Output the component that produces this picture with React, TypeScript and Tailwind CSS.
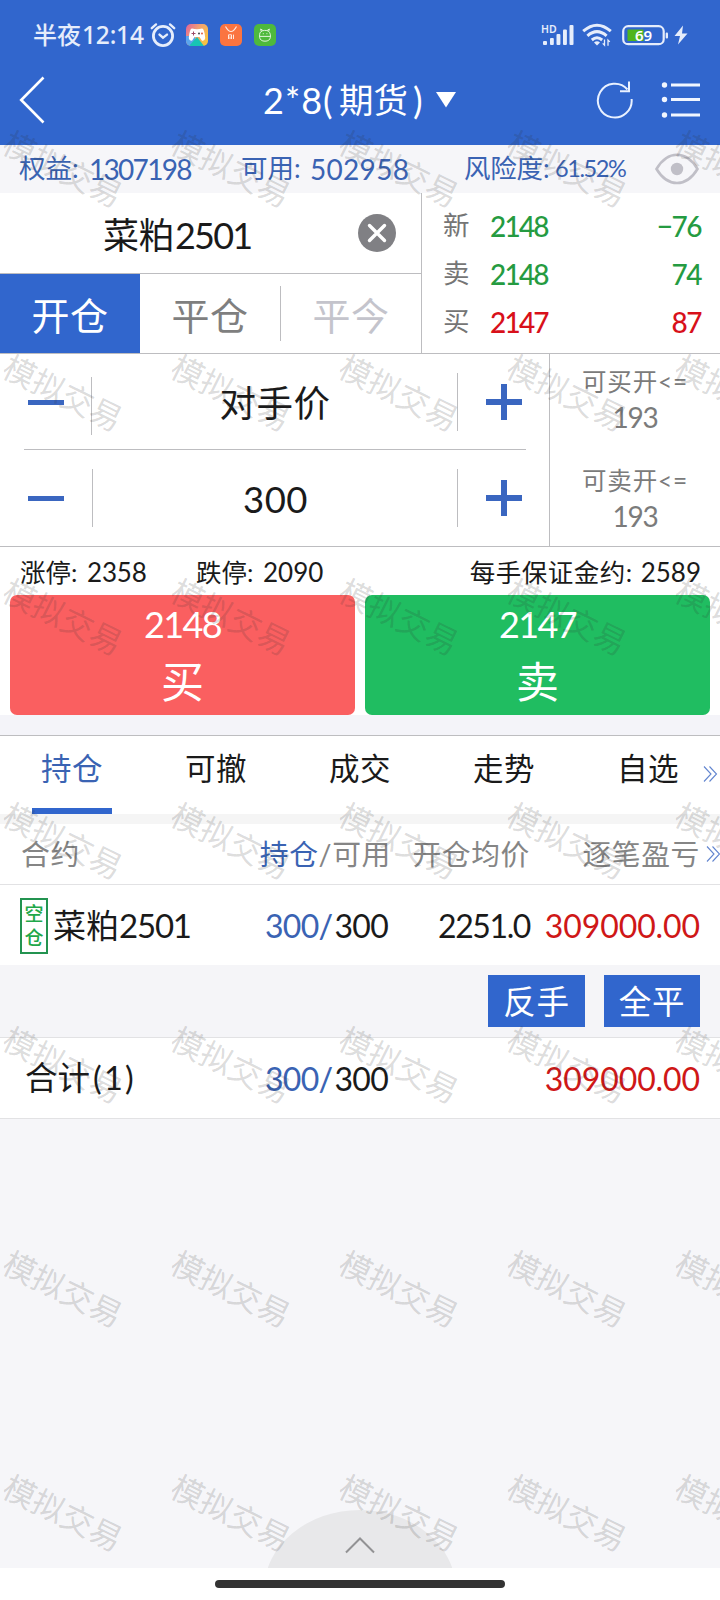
import React from "react";

const FONT = "font-['Lato','Noto_Sans_CJK_SC',sans-serif]";

function StatusBar() {
  return (
    <div className="flex h-[70px] items-start justify-between pl-[33px] pr-[32px] text-[#e6edfb]">
      <div className="flex h-[70px] items-center">
        <span className="w-[117px] whitespace-nowrap font-['Noto_Sans','Noto_Sans_CJK_SC',sans-serif] text-[24px] font-medium leading-[70px]">
          半夜<span className="ml-px text-[24.5px] tracking-[-0.2px]">12:14</span>
        </span>
        <svg className="h-[26px] w-[26px]" viewBox="0 0 26 26" fill="none" stroke="#e6edfb" strokeWidth="2.8" strokeLinecap="round">
          <circle cx="13" cy="14" r="9.6" />
          <path d="M1.8 6.2 6 2.4M24.2 6.2 20 2.4" strokeWidth="2.4" />
          <path d="M9.5 12.6 13 15.6 17 12.6" strokeWidth="2.4" />
        </svg>
        <svg className="ml-[10px] h-[22px] w-[22px]" viewBox="0 0 22 22">
          <defs>
            <linearGradient id="game" x1="0" y1="0" x2="1" y2="0.6">
              <stop offset="0" stopColor="#e0609c" />
              <stop offset="0.5" stopColor="#f2a172" />
              <stop offset="1" stopColor="#f6c244" />
            </linearGradient>
            <clipPath id="gclip"><rect width="22" height="22" rx="5" /></clipPath>
          </defs>
          <g clipPath="url(#gclip)">
            <rect width="22" height="22" fill="url(#game)" />
            <path d="M0 12h9v10H0z" fill="#5aa5ee" />
            <path d="M3 22 11 13l7 9z" fill="#18c5b4" />
            <path d="M6 4.5q5 1.6 10 0 2.4 0 3.2 9.5-.5 3.4-3.4 2.500L13.500 13h-5L6.200 16.500q-3 .8-3.400-2.500Q3.600 4.500 6 4.500z" fill="#fff" />
            <path d="M7.500 7.500v4M5.500 9.500h4" stroke="#9c4a66" strokeWidth="1" />
            <circle cx="13" cy="9.500" r="0.900" fill="#333" />
            <circle cx="16" cy="9.500" r="0.900" fill="#e05030" />
          </g>
        </svg>
        <svg className="ml-[12px] h-[22px] w-[22px]" viewBox="0 0 22 22" fill="none">
          <rect width="22" height="22" rx="5" fill="#fb7440" />
          <path d="M5.500 2.500q5.500 10 11 0" stroke="#ffe9df" strokeWidth="1.200" />
          <path d="M8.500 15v-4.200h3V15M10 12.400V15M13.500 10.600V15" stroke="#ffe9df" strokeWidth="1" />
        </svg>
        <svg className="ml-[12px] h-[22px] w-[22px]" viewBox="0 0 22 22" fill="none">
          <rect width="22" height="22" rx="5" fill="#4eb93c" />
          <path d="M5.600 10.800q0-4 5-4.400t5.800 4.400v2.400q-.6 4-5.400 4t-5.400-4zM5.600 12.400h10.800M7.300 7.400 6.600 5l2.200 1.400M14.700 7.400l.7-2.400-2.200 1.400M9.300 9.200v1M12.900 9.200v1" stroke="#dff5da" strokeWidth="1" />
        </svg>
      </div>
      <div className="flex h-[70px] items-center">
        <svg className="h-[24px] w-[34px]" viewBox="0 0 34 24" fill="#e6edfb">
          <text x="0" y="9.500" fontSize="10.500" fontWeight="600" fontFamily="Noto Sans, sans-serif">HD</text>
          <rect x="2" y="18" width="4" height="4" rx="1" />
          <rect x="9" y="15" width="3.800" height="7" rx="1" />
          <rect x="15.500" y="11" width="3.900" height="11" rx="1" />
          <rect x="22" y="6.500" width="3.900" height="15.500" rx="1" />
          <rect x="28.500" y="2" width="4" height="20" rx="1" />
        </svg>
        <svg className="ml-[7px] h-[24px] w-[30px]" viewBox="0 0 30 24" fill="none" stroke="#e6edfb" strokeWidth="3">
          <path d="M1.200 8.200q13.800-12 27.600 0M5.400 12.800q9.600-8.400 19.200 0M9.800 17q5.200-4.400 10.400 0" />
          <path d="m15 22.500-3-3q3-2.400 6 0z" fill="#e6edfb" stroke="none" />
          <path d="M22.500 16.500v5.700l-1.800-1.800M26 22.800v-5.700l1.800 1.800" strokeWidth="1.300" />
        </svg>
        <svg className="ml-[10px] h-[22px] w-[47px]" viewBox="0 0 47 22">
          <rect x="1.200" y="2.200" width="40.500" height="18" rx="5" fill="none" stroke="#e6edfb" strokeWidth="2.200" />
          <rect x="5.500" y="5.500" width="16" height="11.500" fill="#4fb51d" />
          <rect x="43.700" y="8.500" width="2.300" height="6" rx="1" fill="#e6edfb" />
          <text x="21.500" y="16.500" textAnchor="middle" fontSize="15" fontWeight="600" fontFamily="Noto Sans, sans-serif" fill="#fff">69</text>
        </svg>
        <svg className="ml-[5px] h-[20px] w-[14px]" viewBox="0 0 14 20">
          <path d="M9 .5.500 11H6L4 19.500 13.500 8.500H8z" fill="#e6edfb" />
        </svg>
      </div>
    </div>
  );
}

function TitleBar() {
  return (
    <div className="grid h-[75px] grid-cols-[263px_1fr_125px] text-white">
      <svg className="ml-[18px] mt-[6px] h-[48px] w-[28px]" viewBox="0 0 28 48" fill="none" stroke="#fff" strokeWidth="2.600">
        <path d="M25.500 1.500 3.200 24l22.300 22.500" />
      </svg>
      <div className="flex h-[60px] items-center whitespace-nowrap">
        <span className="w-[69px] text-[36px] tracking-[1px]">2*8(</span>
        <span className="ml-[7px] text-[34.500px]">期货</span>
        <span className="ml-[5px] w-[20px] text-[36px]">)</span>
        <svg className="ml-[2px] mt-[-1px] h-[16px] w-[22px]" viewBox="0 0 22 16"><path d="M1 0h20L11 15.500z" fill="#fff" /></svg>
      </div>
      <div className="flex h-[60px] items-center">
        <svg className="h-[40px] w-[40px]" viewBox="0 0 40 40" fill="none" stroke="#e9f1ff" strokeWidth="2">
          <path d="M36.600 19A16.900 16.900 0 1 1 32.500 9.500" />
          <path d="M34 1.500V11.300H25" />
        </svg>
        <svg className="ml-[26px] h-[40px] w-[40px]" viewBox="0 0 40 40" fill="#f1f6ff">
          <circle cx="3.500" cy="5" r="2.700" /><circle cx="3.500" cy="19.500" r="2.700" /><circle cx="3.500" cy="35" r="2.700" />
          <path d="M10 3.500h29v3H10zM10 18h29v3H10zM10 33.500h29v3H10z" />
        </svg>
      </div>
    </div>
  );
}

function AccountBar() {
  return (
    <div className="flex h-[48px] items-center whitespace-nowrap bg-[#f6f6f9] pl-[19px] text-[26.500px] text-[#3a63b3]">
      <span className="w-[70px]">权益:</span>
      <span className="w-[152px] text-[28px] tracking-[-1.700px]">1307198</span>
      <span className="w-[69px]">可用:</span>
      <span className="w-[154px] text-[28px] tracking-[0.300px]">502958</span>
      <span className="w-[91px] tracking-[-0.200px]">风险度:</span>
      <span className="w-[100px] text-[23.500px] tracking-[-1.400px]">61.52%</span>
      <svg className="h-[32px] w-[44px]" viewBox="0 0 44 32" fill="none" stroke="#c0bfc7" strokeWidth="2.600">
        <path d="M1.500 16Q10 1.800 22 1.800T42.500 16Q34 30 22 30T1.500 16z" />
        <circle cx="22" cy="16" r="6.200" fill="#c0bfc7" stroke="none" />
      </svg>
    </div>
  );
}

function QuoteRow({ label, price, volume, tone }: { label: string; price: string; volume: string; tone: string }) {
  return (
    <div className="flex h-[48px] items-center">
      <span className="w-[47px] text-[26.500px] text-[#757575]">{label}</span>
      <span className={`flex-1 text-[28px] font-medium tracking-[-1.800px] ${tone}`}>{price}</span>
      <span className={`text-[28px] font-medium tracking-[-1.500px] ${tone}`}>{volume}</span>
    </div>
  );
}

function ContractPanel() {
  return (
    <div className="flex h-[161px] border-b border-[#bdbdc0] bg-white">
      <div className="flex w-[422px] flex-col border-r border-[#bdbdc0]">
        <div className="flex h-[81px] items-center border-b border-[#bdbdc0] pl-[103px]">
          <span className="w-[255px] whitespace-nowrap pt-[3px] text-[36px] leading-[78px] tracking-[-0.500px] text-[#1a1a1a]">
            菜粕<span className="ml-[1px] tracking-[-1.800px]">2501</span>
          </span>
          <svg className="h-[38px] w-[38px]" viewBox="0 0 38 38">
            <circle cx="19" cy="19" r="19" fill="#808084" />
            <path d="m11.500 11.500 15 15m0-15-15 15" stroke="#fff" strokeWidth="3.400" strokeLinecap="round" />
          </svg>
        </div>
        <div className="flex flex-1 items-stretch text-[38px] tracking-[0.500px]">
          <div className="flex w-[140px] items-center justify-center bg-[#3166cd] pt-[3px] text-white">开仓</div>
          <div className="flex w-[140px] items-center justify-center pt-[3px] text-[#7f7f7f]">平仓</div>
          <div className="my-[12px] w-px bg-[#bdbdc0]" />
          <div className="flex w-[140px] items-center justify-center pt-[3px] text-[#c4c4cc]">平今</div>
        </div>
      </div>
      <div className="flex-1 pl-[21px] pr-[19px] pt-[9px]">
        <QuoteRow label="新" price="2148" volume="−76" tone="text-[#259b41]" />
        <QuoteRow label="卖" price="2148" volume="74" tone="text-[#259b41]" />
        <QuoteRow label="买" price="2147" volume="87" tone="text-[#d8101a]" />
      </div>
    </div>
  );
}

function Stepper({ children, divider }: { children: React.ReactNode; divider: string }) {
  return (
    <div className="flex h-[96px] items-center pl-[28px]">
      <div className="h-[5px] w-[36px] bg-[#3a66c0]" />
      <div className={`h-[58px] w-px bg-[#bdbdc0] ${divider}`} />
      <div className="flex-1 pl-px pt-[2px] text-center text-[36.500px] tracking-[0.500px] text-[#1a1a1a]">{children}</div>
      <div className="mb-px h-[58px] w-px bg-[#bdbdc0]" />
      <svg className="ml-[28px] mr-[27px] h-[36px] w-[36px]" viewBox="0 0 36 36"><path d="M15 0h6v36h-6zM0 15h36v6H0z" fill="#3a66c0" /></svg>
    </div>
  );
}

function OrderPanel() {
  return (
    <div className="flex h-[193px] border-b border-[#bdbdc0] bg-white">
      <div className="flex w-[550px] flex-col border-r border-[#bdbdc0]">
        <Stepper divider="ml-[27px] mt-[7px]">对手价</Stepper>
        <div className="-mt-px ml-[24px] h-px w-[502px] bg-[#bdbdc0]" />
        <Stepper divider="ml-[28px]">300</Stepper>
      </div>
      <div className="flex flex-1 flex-col items-center pt-[10px] text-[#7b7b7b]">
        <div className="h-[36px] text-[24.500px] leading-[36px] tracking-[0.800px]">可买开&lt;=</div>
        <div className="h-[36px] text-[28px] leading-[35px] tracking-[-1.200px]">193</div>
        <div className="mt-[26px] h-[36px] text-[24.500px] leading-[37px] tracking-[0.800px]">可卖开&lt;=</div>
        <div className="h-[36px] text-[28px] leading-[36px] tracking-[-1.200px]">193</div>
      </div>
    </div>
  );
}

function TradeButton({ price, label, tone }: { price: string; label: string; tone: string }) {
  return (
    <button className={`flex h-[120px] flex-1 flex-col items-center rounded-[7px] text-white ${tone}`}>
      <span className="h-[58px] text-[36px] leading-[58px] tracking-[-1.600px]">{price}</span>
      <span className="h-[56px] text-[43px] leading-[57px]">{label}</span>
    </button>
  );
}

function TradeArea() {
  return (
    <div className="h-[168px] bg-white">
      <div className="flex h-[48px] items-center whitespace-nowrap pl-[20px] pr-[19px] pt-[2px] text-[25.500px] text-[#1a1a1a]">
        <span className="w-[67px]">涨停:</span>
        <span className="w-[109px] text-[26px] tracking-[-0.200px]">2358</span>
        <span className="w-[67px]">跌停:</span>
        <span className="flex-1 text-[26px]">2090</span>
        <span className="mr-[8px] tracking-[0.500px]">每手保证金约:</span>
        <span className="text-[26px]">2589</span>
      </div>
      <div className="flex gap-[10px] px-[10px]">
        <TradeButton price="2148" label="买" tone="bg-[#fa5f60]" />
        <TradeButton price="2147" label="卖" tone="bg-[#20bd61]" />
      </div>
    </div>
  );
}

function More({ className }: { className: string }) {
  return (
    <svg className={`absolute h-[16px] w-[15px] ${className}`} viewBox="0 0 15 16" fill="none" stroke="#6285cf" strokeWidth="1.100">
      <path d="m1 .5 7 7.500-7 7.500M6.500.5l7 7.500-7 7.500" />
    </svg>
  );
}

function Tabs() {
  return (
    <div className="relative flex h-[79px] border-t border-[#bdbdc0] bg-white text-[30.500px] text-[#1a1a1a]">
      {["持仓", "可撤", "成交", "走势", "自选"].map((t, i) => (
        <div key={t} className={`flex w-[144px] flex-col items-center ${i === 0 ? "text-[#3a63b3]" : ""}`}>
          <span className="h-[72px] leading-[64px] tracking-[0.400px]">{t}</span>
          {i === 0 && <span className="h-[6px] w-[80px] bg-[#3166cd]" />}
        </div>
      ))}
      <More className="right-[2px] top-[30px]" />
    </div>
  );
}

const COLS = "grid grid-cols-[240px_151px_139px_170px] items-center whitespace-nowrap";

function Amount() {
  return (
    <span className="pr-[3px] text-right tracking-[-0.700px]">
      <span className="mr-[2px] text-[#3a63b3]">300<span className="font-medium">/</span></span>300
    </span>
  );
}

function Positions() {
  return (
    <div className="text-[32px] text-[#1a1a1a]">
      <div className={`${COLS} relative h-[61px] border-b border-[#e2e2e4] bg-white pt-px text-[28.800px] tracking-[0.600px] text-[#858585]`}>
        <span className="pl-[21px]">合约</span>
        <span className="text-right"><span className="text-[#3a63b3]">持仓</span>/可用</span>
        <span className="text-right">开仓均价</span>
        <span className="text-right">逐笔盈亏</span>
        <More className="right-[-1px] top-[22px]" />
      </div>
      <div className={`${COLS} h-[80px] bg-white pt-px`}>
        <span className="flex items-center pl-[20px]">
          <span className="flex h-[56px] w-[28px] flex-col items-center justify-center border-2 border-[#239350] text-[19px] font-medium leading-[24px] text-[#1fa84a]">
            <span>空</span><span>仓</span>
          </span>
          <span className="ml-[5px] text-[33px]">菜粕<span className="tracking-[-1.200px]">2501</span></span>
        </span>
        <Amount />
        <span className="text-right tracking-[-1.400px]">2251.0</span>
        <span className="text-right tracking-[-0.100px] text-[#cf1717]">309000.00</span>
      </div>
      <div className="flex h-[73px] items-start justify-end gap-[19px] border-b border-[#e2e2e4] bg-[#f5f5f8] pr-[20px] pt-[10px] text-[32.500px] text-white">
        <button className="h-[52px] w-[97px] bg-[#3166cd] leading-[54px] tracking-[0.800px]">反手</button>
        <button className="h-[52px] w-[96px] bg-[#3166cd] leading-[54px] tracking-[0.800px]">全平</button>
      </div>
      <div className={`${COLS} h-[81px] border-b border-[#e2e2e4] bg-white pt-px`}>
        <span className="pl-[25px] text-[32.500px]">合计<span className="ml-[3px] tracking-[2.200px]">(1)</span></span>
        <Amount />
        <span />
        <span className="text-right tracking-[-0.100px] text-[#cf1717]">309000.00</span>
      </div>
    </div>
  );
}

function Watermark() {
  return (
    <div className="pointer-events-none absolute left-[-21px] top-[57px] grid w-[840px] grid-cols-[repeat(5,168px)] auto-rows-[224px]">
      {Array.from({ length: 35 }, (_, i) => (
        <div key={i} className="flex items-center justify-center text-[32px] leading-[40px] text-[#303030]/18">
          <span className="rotate-[26.500deg] whitespace-nowrap">模拟交易</span>
        </div>
      ))}
    </div>
  );
}

export default function App() {
  return (
    <div className={`relative flex h-[1600px] w-[720px] flex-col overflow-hidden bg-[#f6f6f9] ${FONT}`}>
      <header className="h-[145px] shrink-0 bg-[#3166cd]">
        <StatusBar />
        <TitleBar />
      </header>
      <AccountBar />
      <ContractPanel />
      <OrderPanel />
      <TradeArea />
      <div className="h-[20px] bg-[#f4f4f9]" />
      <Tabs />
      <div className="h-[10px] bg-[#f5f5f5]" />
      <Positions />
      <div className="flex flex-1 items-end justify-center overflow-hidden">
        <div className="flex h-[58px] w-[184px] justify-center overflow-hidden">
          <div className="flex h-[160px] w-[192px] shrink-0 justify-center rounded-[50%] bg-[#e8e8ea] pt-[27px]">
            <svg className="h-[17px] w-[30px]" viewBox="0 0 30 17" fill="none" stroke="#929294" strokeWidth="2"><path d="M1 15.500 15 1.500l14 14" /></svg>
          </div>
        </div>
      </div>
      <footer className="flex h-[32px] items-center justify-center bg-white">
        <div className="h-[8px] w-[290px] rounded-full bg-[#333]" />
      </footer>
      <Watermark />
    </div>
  );
}
